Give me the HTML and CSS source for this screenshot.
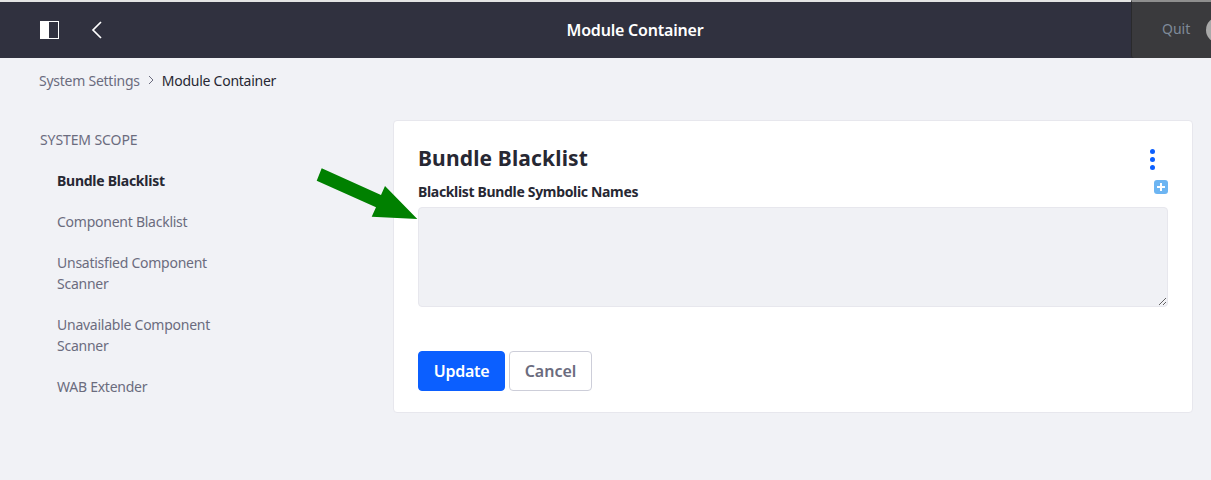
FILE: index.html
```html
<!DOCTYPE html>
<html lang="en">
<head>
    <meta charset="UTF-8">
    <meta name="viewport" content="width=device-width, initial-scale=1.0">
    <title>Module Container</title>
    <link rel="stylesheet" href="styles.css">
</head>
<body>
    <header class="topbar">
        <div class="topbar-left">
            <svg class="icon-panel" width="20" height="18" viewBox="0 0 20 18">
                <rect x="0.5" y="0.5" width="18" height="17" fill="none" stroke="#fff"/>
                <rect x="0" y="0" width="9" height="18" fill="#fff"/>
            </svg>
            <svg class="icon-back" width="12" height="18" viewBox="0 0 12 18">
                <path d="M10 1 L2 9 L10 17" fill="none" stroke="#fff" stroke-width="1.7"/>
            </svg>
        </div>
        <div class="topbar-title">Module Container</div>
        <div class="quit-panel">
            <span class="quit-label">Quit</span>
            <span class="quit-avatar"></span>
        </div>
    </header>

    <nav class="breadcrumb">
        <span class="crumb-link">System Settings</span>
        <svg class="crumb-sep" width="6" height="10" viewBox="0 0 6 10">
            <path d="M1 1 L5 5 L1 9" fill="none" stroke="#6b6c7e" stroke-width="1"/>
        </svg>
        <span class="crumb-current">Module Container</span>
    </nav>

    <main class="layout">
        <aside class="sidebar">
            <h2 class="sidebar-title">SYSTEM SCOPE</h2>
            <ul class="sidebar-list">
                <li class="active">Bundle Blacklist</li>
                <li>Component Blacklist</li>
                <li>Unsatisfied Component Scanner</li>
                <li>Unavailable Component Scanner</li>
                <li>WAB Extender</li>
            </ul>
        </aside>

        <section class="card">
            <div class="card-head">
                <h1>Bundle Blacklist</h1>
                <span class="kebab"><i></i><i></i><i></i></span>
            </div>
            <div class="field-head">
                <label for="names">Blacklist Bundle Symbolic Names</label>
                <svg class="icon-add" width="14" height="14" viewBox="0 0 14 14">
                    <rect width="14" height="14" rx="3" fill="#6db5f2"/>
                    <path d="M7 3 V11 M3 7 H11" stroke="#fff" stroke-width="2"/>
                </svg>
            </div>
            <textarea id="names" class="names-input"></textarea>
            <div class="actions">
                <button class="btn btn-primary">Update</button>
                <button class="btn btn-secondary">Cancel</button>
            </div>
        </section>
    </main>

    <!-- annotation drawn over the screenshot -->
    <svg class="arrow" width="110" height="60" viewBox="0 0 110 60">
        <polygon points="5.7,0.3 0.7,12.7 60,39.3 55.7,48.7 101.3,51 69,18 65,27" fill="#008000"/>
    </svg>
</body>
</html>
```

FILE: styles.css
```css
* {
    box-sizing: border-box;
}

body {
    margin: 0;
    height: 480px;
    overflow: hidden;
    position: relative;
    font-family: "Noto Sans", "Open Sans", sans-serif;
    background-color: #f1f2f6;
    color: #272833;
}

.topbar {
    display: flex;
    align-items: center;
    height: 58px;
    border-top: 2px solid #e4e4e4;
    background-color: #30313f;
}

.topbar-left {
    display: flex;
    align-items: center;
    gap: 31px;
    width: 139px;
    padding-left: 40px;
}

.topbar-title {
    flex: 1;
    text-align: center;
    color: white;
    font-size: 16px;
    font-weight: 600;
    letter-spacing: -0.2px;
}

.quit-panel {
    display: flex;
    align-items: center;
    justify-content: space-between;
    width: 80px;
    height: 58px;
    margin-top: -2px;
    padding-left: 30px;
    overflow: hidden;
    border-top: 2px solid #8e8e8e;
    border-left: 1px solid #2a2a2c;
    border-bottom-left-radius: 3px;
    background-color: #3a3a3d;
}

.quit-label {
    margin-top: -4px;
    color: #7f8a99;
    font-size: 14px;
}

.quit-avatar {
    flex-shrink: 0;
    width: 26px;
    height: 26px;
    margin-right: -21px;
    border-radius: 50%;
    background-color: #a9a9a9;
}

.breadcrumb {
    display: flex;
    align-items: center;
    gap: 8px;
    height: 44px;
    padding-left: 39px;
    font-size: 14px;
    letter-spacing: -0.25px;
}

.crumb-link {
    color: #6b6c7e;
}

.crumb-current {
    color: #272833;
}

.layout {
    display: flex;
    align-items: flex-start;
    padding: 18px 18px 0 40px;
}

.sidebar {
    width: 353px;
    flex-shrink: 0;
}

.sidebar-title {
    margin: 0;
    padding-top: 10px;
    font-size: 14px;
    font-weight: 400;
    line-height: 20px;
    letter-spacing: -0.1px;
    color: #6b6c7e;
}

.sidebar-list {
    list-style: none;
    margin: 20px 0 0;
    padding: 0 0 0 17px;
    width: 190px;
    font-size: 14px;
    line-height: 21px;
    letter-spacing: -0.25px;
    color: #6b6c7e;
}

.sidebar-list li {
    margin-bottom: 20px;
}

.sidebar-list .active {
    font-weight: 700;
    color: #272833;
}

.card {
    width: 800px;
    height: 293px;
    padding: 24px;
    background-color: white;
    border: 1px solid #e7e7ed;
    border-radius: 4px;
}

.card-head {
    display: flex;
    justify-content: space-between;
    align-items: center;
    height: 27px;
}

.card-head h1 {
    margin: 0;
    font-size: 21px;
    font-weight: 700;
    line-height: 27px;
    letter-spacing: 0.15px;
}

.kebab {
    display: flex;
    flex-direction: column;
    gap: 3px;
    margin-top: 1px;
    margin-right: 13px;
}

.kebab i {
    width: 5px;
    height: 5px;
    border-radius: 50%;
    background-color: #0b5fff;
}

.field-head {
    display: flex;
    justify-content: space-between;
    height: 32px;
    padding-top: 10px;
}

.field-head label {
    font-size: 14px;
    font-weight: 700;
    line-height: 19px;
    letter-spacing: -0.33px;
}

.icon-add {
    margin-top: -2px;
}

.names-input {
    display: block;
    width: 750px;
    height: 100px;
    margin-top: 3px;
    background-color: #f0f1f5;
    border: 1px solid #e7e7ed;
    border-radius: 4px;
    outline: none;
}

.actions {
    display: flex;
    gap: 4px;
    margin-top: 44px;
}

.btn {
    height: 40px;
    font-family: inherit;
    font-size: 16px;
    font-weight: 600;
    border-radius: 4px;
    cursor: pointer;
}

.btn-primary {
    width: 87px;
    color: white;
    letter-spacing: -0.3px;
    background-color: #0b5fff;
    border: 1px solid #0b5fff;
}

.btn-secondary {
    width: 83px;
    color: #6b6c7e;
    background-color: white;
    border: 1px solid #cdced9;
}

.arrow {
    position: absolute;
    left: 316px;
    top: 168px;
}
```
